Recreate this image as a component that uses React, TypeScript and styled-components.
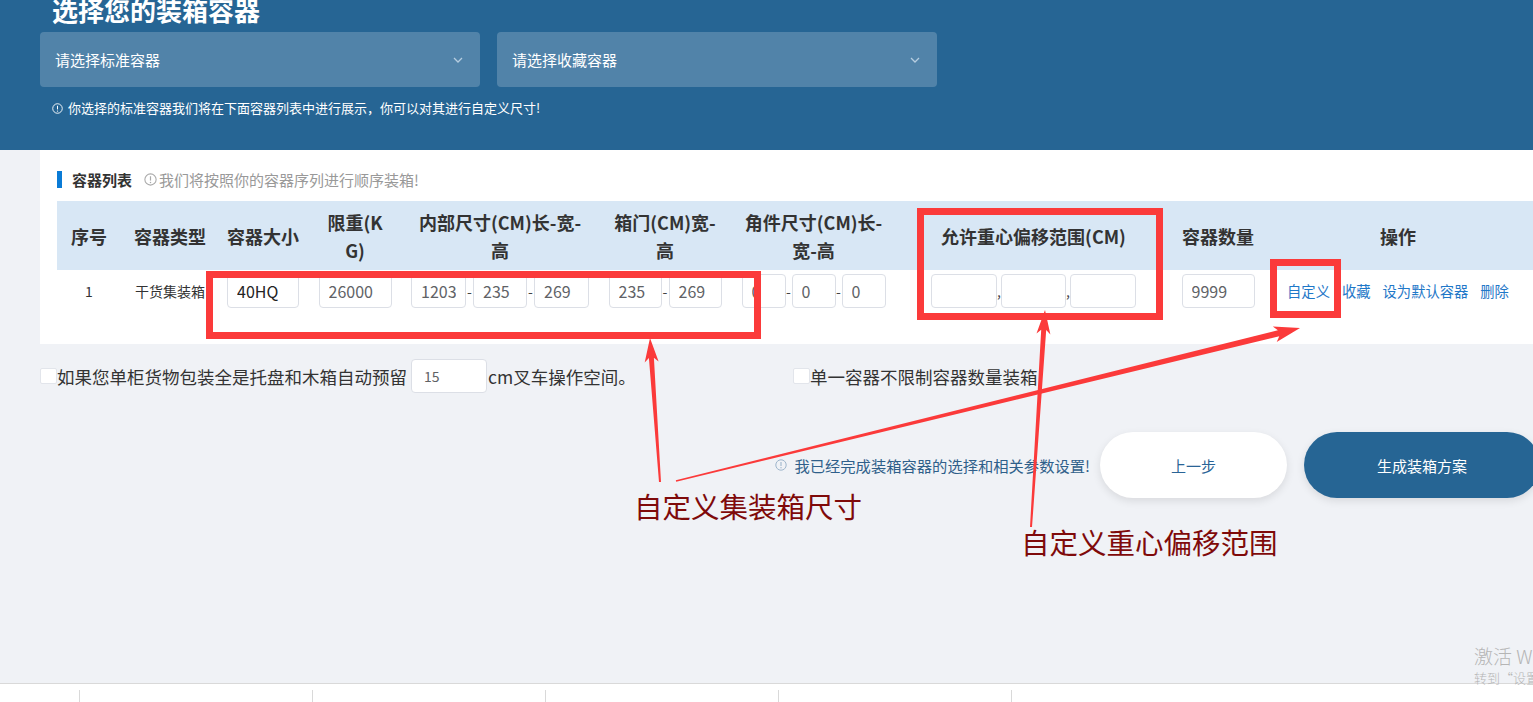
import React from "react";
import styled, { createGlobalStyle } from "styled-components";

const GlobalStyle = createGlobalStyle`
  html, body { margin: 0; padding: 0; background: #f0f2f6; overflow: hidden; }
  body { font-family: "Noto Sans CJK SC", "Noto Sans", sans-serif; }
  * { box-sizing: border-box; }
`;

const Page = styled.div`
  position: relative;
  width: 100%;
  height: 100vh;
  display: flex;
  flex-direction: column;
  overflow: hidden;
`;

const Header = styled.header`
  background: #266594;
  height: 150px;
  flex-shrink: 0;
  padding-left: 40px;
  overflow: hidden;
`;

const Title = styled.h1`
  margin: -6px 0 0 12px;
  font-size: 26px;
  line-height: 32px;
  font-weight: 700;
  color: #fff;
`;

const SelectRow = styled.div`
  display: flex;
  gap: 17px;
  margin-top: 6px;
`;

const Select = styled.div`
  width: 440px;
  height: 55px;
  background: rgba(255, 255, 255, 0.2);
  border-radius: 4px;
  display: flex;
  align-items: center;
  justify-content: space-between;
  padding: 0 17px 0 15px;
  color: #fff;
  font-size: 15px;
`;

const HeaderNote = styled.div`
  margin-top: 12px;
  padding-left: 12px;
  display: flex;
  align-items: center;
  gap: 5px;
  color: #fff;
  font-size: 13px;
  line-height: 18px;
`;

const Card = styled.section`
  margin-left: 40px;
  background: #fff;
  padding: 20px 0 13px 17px;
  flex-shrink: 0;
`;

const SectionTitle = styled.div`
  display: flex;
  align-items: center;
  height: 18px;
  margin-bottom: 13px;
`;

const Bar = styled.span`
  width: 5px;
  height: 17px;
  background: #0a7bd6;
  margin-right: 10px;
`;

const SectionName = styled.span`
  font-size: 15px;
  font-weight: 700;
  color: #333;
`;

const SectionHint = styled.span`
  margin-left: 12px;
  display: flex;
  align-items: center;
  gap: 2px;
  font-size: 15px;
  color: #999;
`;

const Table = styled.table`
  border-collapse: collapse;
  table-layout: fixed;
  width: 1476px;
`;

const Col = styled.col<{ $w: number }>`
  width: ${(p) => p.$w}px;
`;

const Th = styled.th`
  background: #d8e7f5;
  height: 69px;
  padding: 0;
  font-size: 18px;
  font-weight: 700;
  line-height: 28px;
  color: #333;
  text-align: center;
  white-space: nowrap;
`;

const Td = styled.td`
  padding: 4px 0 22px;
  vertical-align: top;
  text-align: center;
  font-size: 14px;
  line-height: 34px;
  color: #333;
  white-space: nowrap;
`;

const Group = styled.div`
  display: inline-flex;
  align-items: center;
  vertical-align: top;
`;

const Sep = styled.span<{ $w: number }>`
  width: ${(p) => p.$w}px;
  text-align: center;
  font-size: 14px;
  color: #444;
  line-height: 34px;
`;

const Field = styled.input<{ $w: number; $dark?: boolean }>`
  width: ${(p) => p.$w}px;
  height: 34px;
  border: 1px solid #dcdfe6;
  border-radius: 4px;
  padding: 0 9px;
  font-family: "Noto Sans CJK SC", "Noto Sans", sans-serif;
  font-size: 16px;
  color: ${(p) => (p.$dark ? "#222" : "#606266")};
  background: #fff;
  outline: none;
`;

const Actions = styled.div`
  display: flex;
  justify-content: center;
  gap: 12px;
  font-size: 14.3px;
  color: #1f78c8;
`;

const OptionsRow = styled.div`
  margin-top: 15px;
  height: 34px;
  display: flex;
  align-items: center;
  padding-left: 40px;
  flex-shrink: 0;
`;

const Option = styled.label<{ $w?: number }>`
  display: flex;
  align-items: center;
  width: ${(p) => (p.$w ? `${p.$w}px` : "auto")};
  font-size: 17.5px;
  color: #333;
  white-space: nowrap;
`;

const Check = styled.span`
  width: 17px;
  height: 16px;
  background: #fff;
  border: 1px solid #e2e5eb;
  border-radius: 2px;
`;

const SmallField = styled.input`
  width: 76px;
  height: 34px;
  margin: 0 1px 0 4px;
  border: 1px solid #dcdfe6;
  border-radius: 4px;
  padding: 0 12px;
  font-family: "Noto Sans CJK SC", "Noto Sans", sans-serif;
  font-size: 14px;
  color: #606266;
  outline: none;
`;

const ActionRow = styled.div`
  margin-top: 39px;
  display: flex;
  justify-content: flex-end;
  align-items: center;
  margin-right: -7px;
  flex-shrink: 0;
`;

const DoneNote = styled.div`
  display: flex;
  align-items: center;
  gap: 7px;
  margin-right: 10px;
  font-size: 15.3px;
  color: #2f5f8a;
`;

const Button = styled.button<{ $primary?: boolean; $w: number }>`
  width: ${(p) => p.$w}px;
  height: 66px;
  border-radius: 33px;
  border: none;
  font-family: "Noto Sans CJK SC", sans-serif;
  font-size: 15px;
  background: ${(p) => (p.$primary ? "#266594" : "#fff")};
  color: ${(p) => (p.$primary ? "#fff" : "#2a6496")};
  box-shadow: 0 3px 8px rgba(0, 0, 0, 0.1);
  margin-left: ${(p) => (p.$primary ? "17px" : "0")};
`;

const Footer = styled.footer`
  margin-top: auto;
  height: 19px;
  border-top: 1px solid #d9d9d9;
  background: #fff;
  padding-left: 79px;
  display: flex;
  flex-shrink: 0;
`;

const FooterCell = styled.div`
  width: 233px;
  height: 12px;
  margin-top: 6px;
  border-left: 1px solid #d9d9d9;
`;

const Watermark = styled.div`
  position: absolute;
  left: 1474px;
  top: 644px;
  color: #b5b5b5;
  white-space: nowrap;
  font-weight: 300;
`;

const WmBig = styled.div`
  font-size: 19px;
  line-height: 24px;
`;

const WmSmall = styled.div`
  font-size: 13px;
  line-height: 20px;
`;

const Overlay = styled.svg`
  position: absolute;
  left: 0;
  top: 0;
  pointer-events: none;
`;

const Note = styled.div<{ $x: number; $y: number }>`
  position: absolute;
  left: ${(p) => p.$x}px;
  top: ${(p) => p.$y}px;
  font-size: 28.5px;
  line-height: 34px;
  color: #7f0a0a;
  white-space: nowrap;
`;

const InfoIcon = ({ color, size = 11 }: { color: string; size?: number }) => (
  <svg width={size} height={size} viewBox="0 0 12 12">
    <circle cx="6" cy="6" r="5.2" fill="none" stroke={color} strokeWidth="1" />
    <line x1="6" y1="3" x2="6" y2="7" stroke={color} strokeWidth="1.1" />
    <circle cx="6" cy="8.8" r="0.7" fill={color} />
  </svg>
);

const Chevron = () => (
  <svg width="10" height="6" viewBox="0 0 10 6">
    <path d="M1 1 L5 5 L9 1" fill="none" stroke="#b6cde0" strokeWidth="1.3" />
  </svg>
);

type P = [number, number];
function arrow(b: P, t: P, w0: number, w1: number, L: number, H: number) {
  const dx = t[0] - b[0];
  const dy = t[1] - b[1];
  const len = Math.hypot(dx, dy);
  const d: P = [dx / len, dy / len];
  const n: P = [-d[1], d[0]];
  const p: P = [t[0] - d[0] * L, t[1] - d[1] * L];
  const q: P = [p[0] - d[0] * 4, p[1] - d[1] * 4];
  const pts: P[] = [
    [b[0] + (n[0] * w0) / 2, b[1] + (n[1] * w0) / 2],
    [p[0] + (n[0] * w1) / 2, p[1] + (n[1] * w1) / 2],
    [q[0] + (n[0] * H) / 2, q[1] + (n[1] * H) / 2],
    t,
    [q[0] - (n[0] * H) / 2, q[1] - (n[1] * H) / 2],
    [p[0] - (n[0] * w1) / 2, p[1] - (n[1] * w1) / 2],
    [b[0] - (n[0] * w0) / 2, b[1] - (n[1] * w0) / 2],
  ];
  return pts.map((x) => `${x[0].toFixed(1)},${x[1].toFixed(1)}`).join(" ");
}

const cols = [64, 98, 88, 96, 194, 136, 161, 279, 90, 270];

export default function App() {
  const RED = "#fb3a3a";
  return (
    <Page>
      <GlobalStyle />
      <Header>
        <Title>选择您的装箱容器</Title>
        <SelectRow>
          <Select>
            <span>请选择标准容器</span>
            <Chevron />
          </Select>
          <Select>
            <span>请选择收藏容器</span>
            <Chevron />
          </Select>
        </SelectRow>
        <HeaderNote>
          <InfoIcon color="#fff" />
          <span>你选择的标准容器我们将在下面容器列表中进行展示，你可以对其进行自定义尺寸!</span>
        </HeaderNote>
      </Header>

      <Card>
        <SectionTitle>
          <Bar />
          <SectionName>容器列表</SectionName>
          <SectionHint>
            <InfoIcon color="#aaa" size={13} />
            <span>我们将按照你的容器序列进行顺序装箱!</span>
          </SectionHint>
        </SectionTitle>
        <Table>
          <colgroup>
            {cols.map((w, i) => (
              <Col key={i} $w={w} />
            ))}
          </colgroup>
          <thead>
            <tr>
              <Th>序号</Th>
              <Th>容器类型</Th>
              <Th>容器大小</Th>
              <Th>
                限重(K
                <br />
                G)
              </Th>
              <Th>
                内部尺寸(CM)长-宽-
                <br />高
              </Th>
              <Th>
                箱门(CM)宽-
                <br />高
              </Th>
              <Th>
                角件尺寸(CM)长-
                <br />
                宽-高
              </Th>
              <Th>允许重心偏移范围(CM)</Th>
              <Th>容器数量</Th>
              <Th>操作</Th>
            </tr>
          </thead>
          <tbody>
            <tr>
              <Td>1</Td>
              <Td>干货集装箱</Td>
              <Td>
                <Field $w={72} $dark readOnly value="40HQ" />
              </Td>
              <Td>
                <Field $w={73} readOnly value="26000" />
              </Td>
              <Td>
                <Group>
                  <Field $w={55} readOnly value="1203" />
                  <Sep $w={7}>-</Sep>
                  <Field $w={54} readOnly value="235" />
                  <Sep $w={7}>-</Sep>
                  <Field $w={55} readOnly value="269" />
                </Group>
              </Td>
              <Td>
                <Group>
                  <Field $w={53} readOnly value="235" />
                  <Sep $w={7}>-</Sep>
                  <Field $w={53} readOnly value="269" />
                </Group>
              </Td>
              <Td>
                <Group>
                  <Field $w={44} readOnly value="0" />
                  <Sep $w={6}>-</Sep>
                  <Field $w={44} readOnly value="0" />
                  <Sep $w={6}>-</Sep>
                  <Field $w={44} readOnly value="0" />
                </Group>
              </Td>
              <Td>
                <Group>
                  <Field $w={66} readOnly value="" />
                  <Sep $w={4}>,</Sep>
                  <Field $w={65} readOnly value="" />
                  <Sep $w={4}>,</Sep>
                  <Field $w={66} readOnly value="" />
                </Group>
              </Td>
              <Td>
                <Field $w={73} readOnly value="9999" />
              </Td>
              <Td>
                <Actions>
                  <span>自定义</span>
                  <span>收藏</span>
                  <span>设为默认容器</span>
                  <span>删除</span>
                </Actions>
              </Td>
            </tr>
          </tbody>
        </Table>
      </Card>

      <OptionsRow>
        <Option $w={753}>
          <Check />
          如果您单柜货物包装全是托盘和木箱自动预留
          <SmallField readOnly value="15" />
          cm叉车操作空间。
        </Option>
        <Option>
          <Check />
          单一容器不限制容器数量装箱
        </Option>
      </OptionsRow>

      <ActionRow>
        <DoneNote>
          <InfoIcon color="#9fb6cc" size={12} />
          <span>我已经完成装箱容器的选择和相关参数设置!</span>
        </DoneNote>
        <Button $w={187}>上一步</Button>
        <Button $w={236} $primary>
          生成装箱方案
        </Button>
      </ActionRow>

      <Footer>
        <FooterCell />
        <FooterCell />
        <FooterCell />
        <FooterCell />
        <FooterCell />
      </Footer>

      <Watermark>
        <WmBig>激活 Windows</WmBig>
        <WmSmall>转到“设置”以激活 Windows。</WmSmall>
      </Watermark>

      <Overlay width="1533" height="702" viewBox="0 0 1533 702">
        <rect x="209.5" y="274.5" width="548" height="61" fill="none" stroke={RED} strokeWidth="7" />
        <rect x="920.5" y="211.5" width="239" height="105" fill="none" stroke={RED} strokeWidth="7" />
        <rect x="1273.5" y="262.5" width="64" height="52" fill="none" stroke={RED} strokeWidth="7" />
        <polygon points={arrow([660, 482], [650, 338], 2, 5, 20, 14)} fill={RED} />
        <polygon points={arrow([676, 481], [1300, 328], 1.5, 6, 22, 16)} fill={RED} />
        <polygon points={arrow([1031, 527], [1045, 310], 2, 5, 20, 14)} fill={RED} />
      </Overlay>
      <Note $x={634} $y={489}>自定义集装箱尺寸</Note>
      <Note $x={1021} $y={525}>自定义重心偏移范围</Note>
    </Page>
  );
}
